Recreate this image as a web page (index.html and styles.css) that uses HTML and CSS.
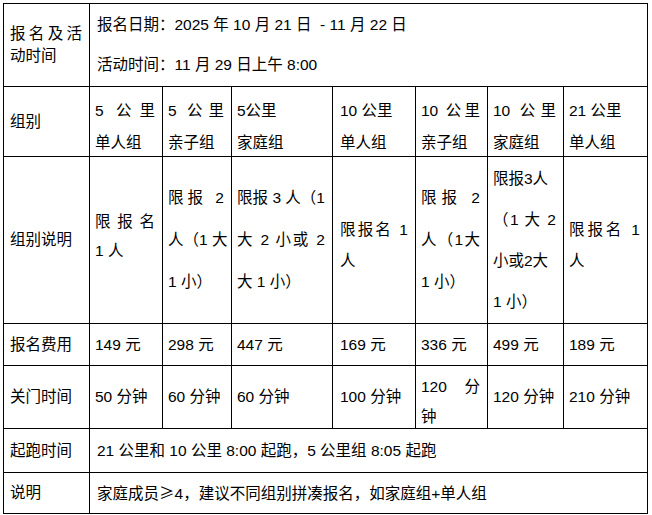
FILE: index.html
```html
<!DOCTYPE html>
<html lang="zh">
<head>
<meta charset="utf-8">
<title>报名及活动时间</title>
<link rel="stylesheet" href="styles.css">
</head>
<body>
<div class="sheet">
  <!-- row 1 -->
  <div class="c first lh22"><div class="j">报名及活</div><div>动时间</div></div>
  <div class="c span lh40"><div>报名日期：2025 年 10 月 21 日&nbsp; - 11 月 22 日</div><div>活动时间：11 月 29 日上午 8:00</div></div>

  <!-- row 2 -->
  <div class="c first">组别</div>
  <div class="c lh32 down"><div class="j">5 公里</div><div>单人组</div></div>
  <div class="c lh32 down"><div class="j">5 公里</div><div>亲子组</div></div>
  <div class="c lh32 down"><div>5公里</div><div>家庭组</div></div>
  <div class="c lh32 down wide"><div>10 公里</div><div>单人组</div></div>
  <div class="c lh32 down"><div class="j">10 公里</div><div>亲子组</div></div>
  <div class="c lh32 down"><div class="j">10 公里</div><div>家庭组</div></div>
  <div class="c lh32 down"><div>21 公里</div><div>单人组</div></div>

  <!-- row 3 -->
  <div class="c first">组别说明</div>
  <div class="c lh29 up"><div class="j">限报名</div><div>1 人</div></div>
  <div class="c lh42"><div class="j">限报 2</div><div class="j">人（1 大</div><div>1 小）</div></div>
  <div class="c lh42"><div class="j">限报 3 人（1</div><div class="j">大 2 小或 2</div><div>大 1 小）</div></div>
  <div class="c lh31 dn9 wide"><div class="j">限报名 1</div><div>人</div></div>
  <div class="c lh42"><div class="j">限报 2</div><div class="j">人（1大</div><div>1 小）</div></div>
  <div class="c lh41"><div>限报3人</div><div class="j">（1 大 2</div><div>小或2大</div><div>1 小）</div></div>
  <div class="c lh31 dn9"><div class="j">限报名 1</div><div>人</div></div>

  <!-- row 4 -->
  <div class="c first">报名费用</div>
  <div class="c">149 元</div>
  <div class="c">298 元</div>
  <div class="c">447 元</div>
  <div class="c wide">169 元</div>
  <div class="c">336 元</div>
  <div class="c">499 元</div>
  <div class="c">189 元</div>

  <!-- row 5 -->
  <div class="c first">关门时间</div>
  <div class="c">50 分钟</div>
  <div class="c">60 分钟</div>
  <div class="c">60 分钟</div>
  <div class="c wide">100 分钟</div>
  <div class="c lh30 dn10"><div class="j">120 分</div><div>钟</div></div>
  <div class="c">120 分钟</div>
  <div class="c">210 分钟</div>

  <!-- row 6 -->
  <div class="c first">起跑时间</div>
  <div class="c span">21 公里和 10 公里 8:00 起跑，5 公里组 8:05 起跑</div>

  <!-- row 7 -->
  <div class="c first">说明</div>
  <div class="c span"><div>家庭成员<span class="cjk">≥</span>4，建议不同组别拼凑报名，如家庭组+单人组</div></div>
</div>
</body>
</html>
```
FILE: styles.css
```css
html, body {
  margin: 0;
  padding: 0;
  background: #fff;
}

body {
  padding: 3px 0 0 3px;
  font-family: "Liberation Sans", "Noto Sans CJK SC", sans-serif;
  font-size: 15.5px;
  color: #000;
}

.sheet {
  display: grid;
  grid-template-columns: 86px 73px 69px 101px 83px 72px 76px 84px;
  grid-template-rows: 83px 70px 167px 42px 63px 44px 41px;
  width: max-content;
  border-left: 1px solid #000;
  border-top: 1px solid #000;
}

.c {
  border-right: 1px solid #000;
  border-bottom: 1px solid #000;
  padding: 0 7px 0 5px;
  display: flex;
  flex-direction: column;
  justify-content: center;
  line-height: 20px;
  white-space: nowrap;
  overflow: hidden;
}

.first { padding-left: 6px; }
.wide { padding-left: 7px; }
.span { grid-column: span 7; padding-left: 7px; }

.cjk { font-family: "Noto Sans CJK SC", sans-serif; }

.j {
  text-align: justify;
  text-align-last: justify;
}

.lh22 { line-height: 22px; }
.lh29 { line-height: 29px; }
.lh30 { line-height: 30px; }
.lh31 { line-height: 31px; }
.lh32 { line-height: 32px; }
.lh40 { line-height: 40px; }
.lh41 { line-height: 41px; }
.lh42 { line-height: 42px; }

.down { padding-top: 11px; }
.up { padding-bottom: 9px; }
.dn9 { padding-top: 9px; }
.dn10 { padding-top: 10px; }
```
